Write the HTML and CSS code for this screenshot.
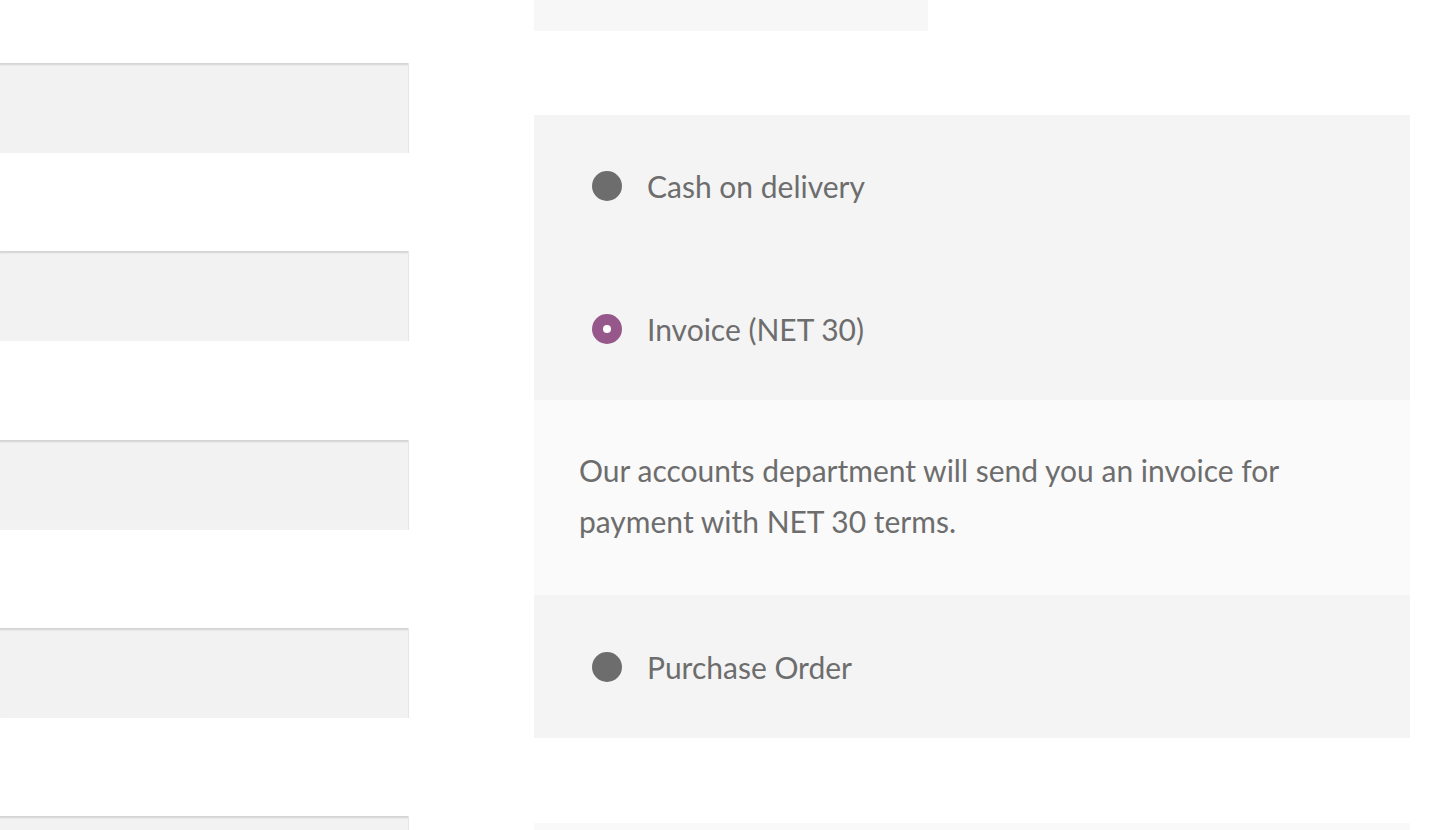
FILE: index.html
```html
<!DOCTYPE html>
<html>
<head>
<meta charset="utf-8">
<link rel="stylesheet" href="styles.css">
</head>
<body>
<div class="page">
  <div class="fields">
    <div class="input"></div>
    <div class="input"></div>
    <div class="input"></div>
    <div class="input"></div>
    <div class="input input-last"></div>
  </div>
  <div class="checkout">
    <div class="top-box"></div>
    <ul class="methods">
      <li class="method"><span class="radio"></span><span class="label">Cash on delivery</span></li>
      <li class="method"><span class="radio checked"></span><span class="label">Invoice (NET 30)</span></li>
      <li class="desc"><p>Our accounts department will send you an invoice for payment with NET 30 terms.</p></li>
      <li class="method"><span class="radio"></span><span class="label">Purchase Order</span></li>
    </ul>
    <div class="bottom-box"></div>
  </div>
</div>
</body>
</html>
```
FILE: styles.css
```css
html, body {
  margin: 0;
  padding: 0;
  background: #ffffff;
  overflow: hidden;
}
body {
  font-family: "Lato", "Open Sans", sans-serif;
  color: #6d6d6d;
}
.page {
  display: flex;
  align-items: flex-start;
  height: 830px;
  overflow: hidden;
}
.fields {
  width: 409px;
  flex: none;
  display: flex;
  flex-direction: column;
  gap: 98.25px;
  padding-top: 63px;
}
.input {
  height: 90px;
  background: #f2f2f2;
  box-shadow: inset 0 3px 2px -1px rgba(0, 0, 0, 0.13);
  border-right: 1px solid #e6e6e6;
  box-sizing: border-box;
}
.input-last {
  height: 14px;
}
.checkout {
  margin-left: 125px;
  width: 876px;
  flex: none;
  display: flex;
  flex-direction: column;
}
.top-box {
  width: 394px;
  height: 31px;
  background: #f7f7f7;
}
.methods {
  list-style: none;
  margin: 84px 0 0;
  padding: 0;
  background: #f4f4f4;
}
.method {
  height: 142.7px;
  display: flex;
  align-items: center;
  padding-left: 58px;
  font-size: 30px;
}
.radio {
  width: 30px;
  height: 30px;
  border-radius: 50%;
  background: #6d6d6d;
  flex: none;
  position: relative;
  margin-right: 25px;
}
.radio.checked {
  background: #96588a;
}
.radio.checked::after {
  content: "";
  position: absolute;
  left: 11px;
  top: 11px;
  width: 8px;
  height: 8px;
  border-radius: 50%;
  background: #ffffff;
}
.label {
  line-height: 1;
}
.desc {
  background: #fafafa;
  height: 195px;
  box-sizing: border-box;
  padding: 45px 80px 0 45px;
  font-size: 30px;
}
.desc p {
  margin: 0;
  line-height: 51px;
}
.bottom-box {
  margin-top: 85px;
  height: 7px;
  background: #f9f9f9;
}
```
